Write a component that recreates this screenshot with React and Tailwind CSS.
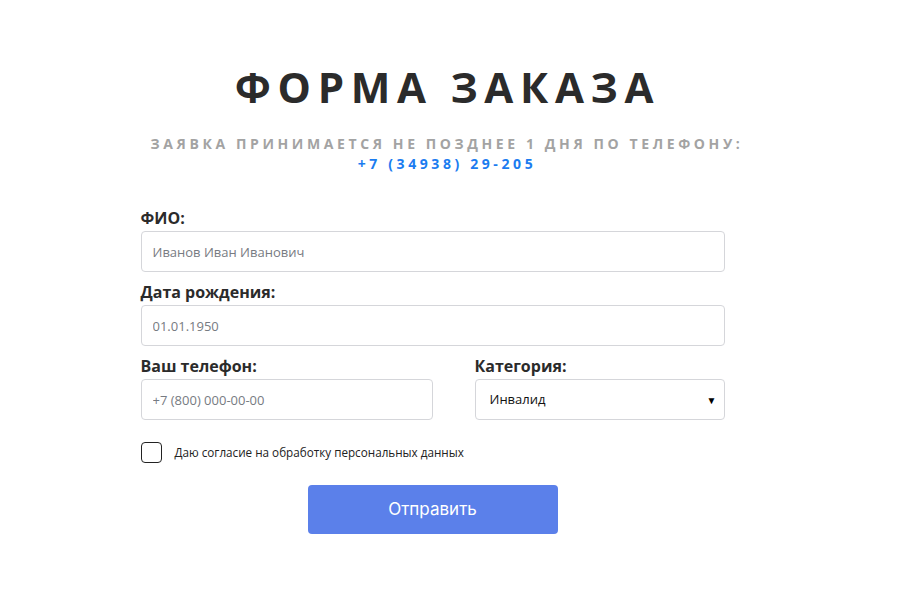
import React, { useState } from "react";

const font = { fontFamily: "'Open Sans', 'Noto Sans', sans-serif" };

const Field = ({ label, placeholder, className = "" }) => (
  <div className={className}>
    <label className="block text-[16px] font-bold leading-[20px] text-[#2b2b2b] mb-[3px]">
      {label}
    </label>
    <input
      type="text"
      placeholder={placeholder}
      className="w-full h-[41px] px-[11px] border border-[#d5d6da] rounded-[4px] text-[13px] text-[#333] placeholder:text-[#777b82] outline-none"
    />
  </div>
);

const App = () => {
  const [agree, setAgree] = useState(false);

  return (
    <div className="min-h-[611px] bg-white pt-[62px]" style={font}>
      {/* Heading */}
      <h1 className="text-center text-[42px] font-bold leading-[50px] tracking-[6.7px] text-[#2b2b2b] pr-[2px]">
        ФОРМА ЗАКАЗА
      </h1>
      <div className="mt-[22px] text-center text-[14px] font-bold leading-[20px] tracking-[3.6px] pr-[3px]">
        <div className="text-[#a3a3a3]">ЗАЯВКА ПРИНИМАЕТСЯ НЕ ПОЗДНЕЕ 1 ДНЯ ПО ТЕЛЕФОНУ:</div>
        <div className="text-[#1b7cf0]">+7 (34938) 29-205</div>
      </div>

      {/* Form */}
      <div className="w-[616px] mx-auto mt-[34px]">
        <form className="w-[584px]" onSubmit={(e) => e.preventDefault()}>
          <Field label="ФИО:" placeholder="Иванов Иван Иванович" />
          <Field label="Дата рождения:" placeholder="01.01.1950" className="mt-[10px]" />

          <div className="flex gap-[42px] mt-[10px]">
            <Field label="Ваш телефон:" placeholder="+7 (800) 000-00-00" className="w-[292px]" />
            <div className="flex-1">
              <label className="block text-[16px] font-bold leading-[20px] text-[#2b2b2b] mb-[3px]">
                Категория:
              </label>
              <div className="relative">
                <select className="w-full h-[41px] appearance-none pl-[14px] pr-8 border border-[#d5d6da] rounded-[4px] text-[13px] text-[#111] bg-white outline-none">
                  <option>Инвалид</option>
                  <option>Пенсионер</option>
                </select>
                <span className="pointer-events-none absolute right-[8px] top-1/2 -translate-y-1/2 text-[10px] text-black">
                  ▼
                </span>
              </div>
            </div>
          </div>

          <label className="flex items-center gap-[13px] mt-[22px] cursor-pointer">
            <span
              onClick={() => setAgree(!agree)}
              className="w-[21px] h-[21px] rounded-[4px] border-[1.5px] border-[#222] flex items-center justify-center"
            >
              {agree && <span className="w-[11px] h-[11px] bg-[#222] rounded-[2px]" />}
            </span>
            <span className="text-[11.7px] text-[#222]">Даю согласие на обработку персональных данных</span>
          </label>

          <div className="flex justify-center mt-[22px]">
            <button
              type="submit"
              className="w-[250px] h-[49px] rounded-[4px] bg-[#5b80ea] text-white text-[17px]"
              style={{ fontFamily: "Inter, Roboto, sans-serif" }}
            >
              Отправить
            </button>
          </div>
        </form>
      </div>
    </div>
  );
};

export default App;
